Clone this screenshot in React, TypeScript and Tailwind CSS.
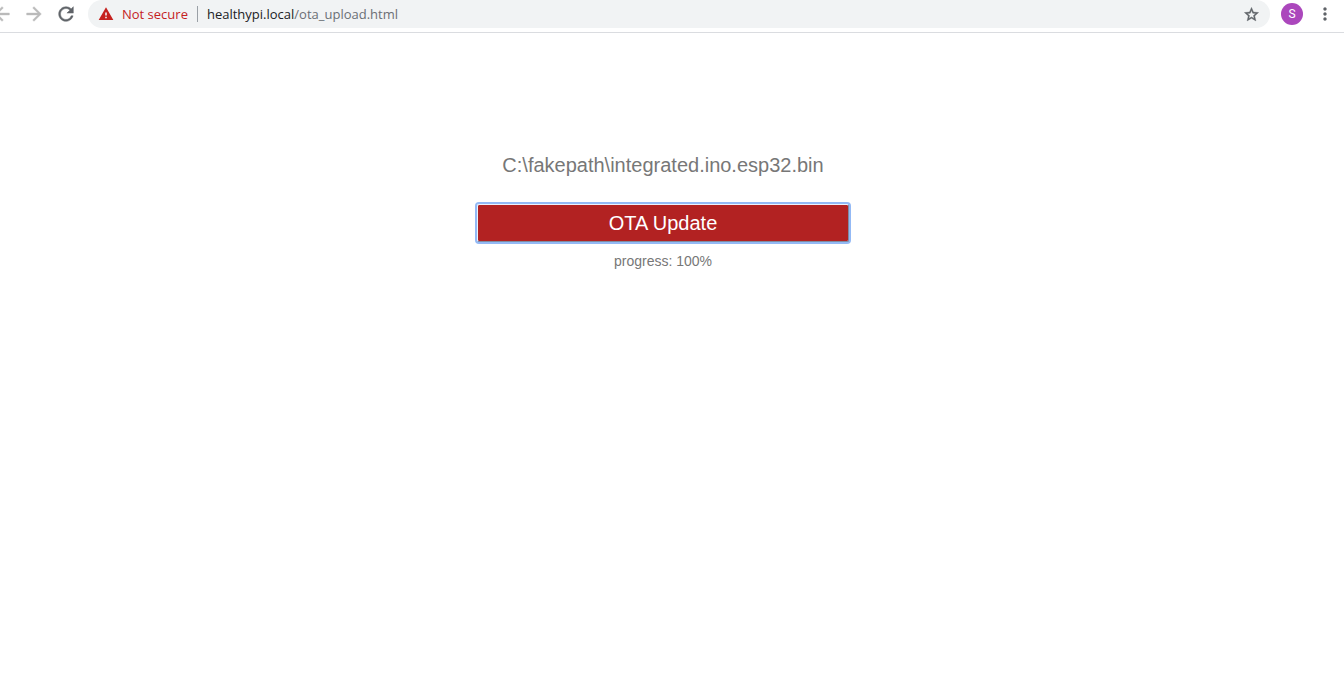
import React from "react";

type IconProps = { path: string; className: string };

function Icon({ path, className }: IconProps) {
  return (
    <svg viewBox="0 0 24 24" fill="currentColor" aria-hidden="true" className={`shrink-0 ${className}`}>
      <path d={path} />
    </svg>
  );
}

const ARROW_BACK = "M20 11H7.83l5.59-5.59L12 4l-8 8 8 8 1.41-1.41L7.83 13H20v-2z";
const ARROW_FORWARD = "M12 4l-1.41 1.41L16.17 11H4v2h12.17l-5.58 5.59L12 20l8-8z";
const REFRESH =
  "M17.65 6.35C16.2 4.9 14.21 4 12 4c-4.42 0-7.99 3.58-7.99 8s3.57 8 7.99 8c3.73 0 6.84-2.55 7.73-6h-2.08c-.82 2.33-3.04 4-5.65 4-3.31 0-6-2.69-6-6s2.69-6 6-6c1.66 0 3.14.69 4.22 1.78L13 11h7V4l-2.35 2.35z";
const WARNING = "M1 21h22L12 2 1 21zm12.2-2.6h-2.4v-2.4h2.4v2.4zm0-4h-2.4v-4.8h2.4v4.8z";
const STAR =
  "M22 9.24l-7.19-.62L12 2 9.19 8.63 2 9.24l5.46 4.73L5.82 21 12 17.27 18.18 21l-1.63-7.03L22 9.24zM12 15.4l-3.76 2.27 1-4.28-3.32-2.88 4.38-.38L12 6.1l1.71 4.04 4.38.38-3.32 2.88 1 4.28L12 15.4z";
const MORE =
  "M12 8c1.1 0 2-.9 2-2s-.9-2-2-2-2 .9-2 2 .9 2 2 2zm0 2c-1.1 0-2 .9-2 2s.9 2 2 2 2-.9 2-2-.9-2-2-2zm0 6c-1.1 0-2 .9-2 2s.9 2 2 2 2-.9 2-2-.9-2-2-2z";

function Toolbar() {
  return (
    <header className="flex items-start overflow-hidden border-b border-[#dadce0] bg-white pb-1 font-['Open_Sans','Noto_Sans',sans-serif]">
      <nav aria-label="Browser" className="-ml-[9px] flex h-7 items-center gap-2.5 pr-[11px] text-[#bababa]">
        <button type="button" aria-label="Back">
          <Icon path={ARROW_BACK} className="size-[22px] stroke-current stroke-[0.5]" />
        </button>
        <button type="button" aria-label="Forward">
          <Icon path={ARROW_FORWARD} className="size-[22px] stroke-current stroke-[0.5]" />
        </button>
        <button type="button" aria-label="Reload" className="text-[#5f6368]">
          <Icon path={REFRESH} className="size-[22px] stroke-current stroke-[0.5]" />
        </button>
      </nav>
      <div className="flex h-7 min-w-0 flex-1 items-center rounded-full bg-[#f1f3f4] px-2.5 text-[13px] leading-5">
        <button type="button" className="flex shrink-0 items-center gap-2 text-[#c5221f]">
          <Icon path={WARNING} className="size-4" />
          <span>Not secure</span>
        </button>
        <span className="mx-[9px] h-4 w-px shrink-0 bg-[#9aa0a6]" />
        <div role="textbox" aria-label="Address" className="min-w-0 flex-1 truncate text-[#6b6f74]">
          <span className="text-[#202124]">healthypi.local</span>/ota_upload.html
        </div>
        <button type="button" aria-label="Bookmark this page" className="text-[#5f6368]">
          <Icon path={STAR} className="size-[17px] stroke-current stroke-[0.6]" />
        </button>
      </div>
      <div className="flex h-7 items-center gap-3 pr-[9px] pl-[11px]">
        <button
          type="button"
          aria-label="Profile"
          className="flex size-[22px] items-center justify-center rounded-full bg-[#ab47bc] font-[Roboto,sans-serif] text-xs text-white"
        >
          S
        </button>
        <button type="button" aria-label="Menu" className="text-[#5f6368]">
          <Icon path={MORE} className="size-5" />
        </button>
      </div>
    </header>
  );
}

export default function App() {
  return (
    <div className="min-h-screen bg-white">
      <Toolbar />
      <main className="pt-[110px] pr-[18px] font-['Liberation_Sans',Arial,sans-serif] text-[#777777]">
        <form
          onSubmit={(event: React.FormEvent) => event.preventDefault()}
          className="mx-auto flex w-full max-w-[372px] flex-col text-center"
        >
          <label htmlFor="firmware" className="h-11 cursor-pointer text-xl leading-[44px]">
            C:\fakepath\integrated.ino.esp32.bin
          </label>
          <input id="firmware" type="file" accept=".bin" className="sr-only" />
          <button
            type="submit"
            className="mt-[17px] h-[38px] rounded-xs border border-t-[#edf2fb] border-r-[#7f8ba3] border-b-[#7f8ba3] border-l-[#edf2fb] bg-[#b22222] bg-clip-padding text-xl text-white ring-2 ring-[#93b9f5]"
          >
            OTA Update
          </button>
          <output className="mt-[9px] text-sm leading-5">progress: 100%</output>
        </form>
      </main>
    </div>
  );
}
